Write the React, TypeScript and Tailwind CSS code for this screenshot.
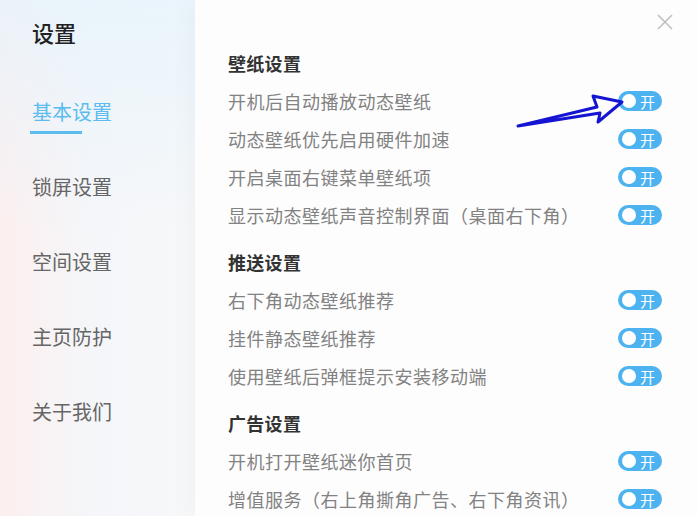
import React from "react";

const font = { fontFamily: '"Noto Sans CJK SC", "Noto Sans", sans-serif' };

interface Section {
    title: string;
    items: string[];
}

const sections: Section[] = [
    {
        title: "壁纸设置",
        items: [
            "开机后自动播放动态壁纸",
            "动态壁纸优先启用硬件加速",
            "开启桌面右键菜单壁纸项",
            "显示动态壁纸声音控制界面（桌面右下角）",
        ],
    },
    {
        title: "推送设置",
        items: ["右下角动态壁纸推荐", "挂件静态壁纸推荐", "使用壁纸后弹框提示安装移动端"],
    },
    {
        title: "广告设置",
        items: ["开机打开壁纸迷你首页", "增值服务（右上角撕角广告、右下角资讯）"],
    },
];

const navItems = ["基本设置", "锁屏设置", "空间设置", "主页防护", "关于我们"];

function Toggle() {
    return (
        <div className="flex items-center w-[44px] h-[20px] rounded-full bg-[#4db3f0] pl-[4px]">
            <span className="w-[14px] h-[14px] rounded-full bg-white" />
            <span className="ml-[4px] text-[15px] leading-none text-white">开</span>
        </div>
    );
}

export default function App() {
    return (
        <div
            className="relative flex w-[698px] h-[516px] overflow-hidden bg-white [text-spacing-trim:space-all]"
            style={font}
        >
            {/* sidebar */}
            <aside className="w-[195px] shrink-0 pl-[32px] pt-[18px] bg-[linear-gradient(180deg,rgba(230,244,252,0.8),rgba(246,247,250,0)_45%),linear-gradient(90deg,#fcefef,#f5f6f9_45%,#f7f8fa)]">
                <div className="text-[22px] leading-[28px] font-medium text-[#222]">设置</div>
                <nav className="mt-[52px]">
                    {navItems.map((item, i) => (
                        <div key={item} className="h-[75px]">
                            <div
                                className={
                                    i === 0
                                        ? "text-[20px] leading-[28px] text-[#5cbcee]"
                                        : "text-[20px] leading-[28px] text-[#666]"
                                }
                            >
                                {item}
                            </div>
                            {i === 0 && <div className="mt-[5px] ml-[-2px] w-[52px] h-[3px] bg-[#5cbcee]" />}
                        </div>
                    ))}
                </nav>
            </aside>

            {/* main panel */}
            <main className="flex-1 pl-[33px] pr-[36px] pt-[44px] bg-[#fdfdfd] shadow-[-10px_0_18px_rgba(0,0,0,0.025)]">
                {sections.map((section, si) => (
                    <div key={section.title} className={si > 0 ? "mt-[9px]" : ""}>
                        <div className="h-[38px] flex items-center text-[18px] tracking-[0.3px] font-bold text-[#333]">
                            {section.title}
                        </div>
                        {section.items.map((item) => (
                            <div key={item} className="h-[38px] flex items-center justify-between">
                                <span className="text-[18px] tracking-[0.5px] text-[#828282]">{item}</span>
                                <Toggle />
                            </div>
                        ))}
                    </div>
                ))}
            </main>

            {/* close */}
            <button className="absolute left-[656px] top-[13px] w-[18px] h-[18px]">
                <svg viewBox="0 0 18 18" width="18" height="18">
                    <path d="M2 2L16 16M16 2L2 16" stroke="#bdbdbd" strokeWidth="1.5" />
                </svg>
            </button>

            {/* annotation arrow */}
            <svg
                className="absolute left-[510px] top-[88px] pointer-events-none"
                width="120"
                height="45"
                viewBox="0 0 120 45"
            >
                <path
                    d="M8 38 L87 19 L83 8 L112 14 L88 34 L90 25 Z"
                    fill="none"
                    stroke="#1414d2"
                    strokeWidth="3"
                    strokeLinejoin="round"
                />
            </svg>
        </div>
    );
}
